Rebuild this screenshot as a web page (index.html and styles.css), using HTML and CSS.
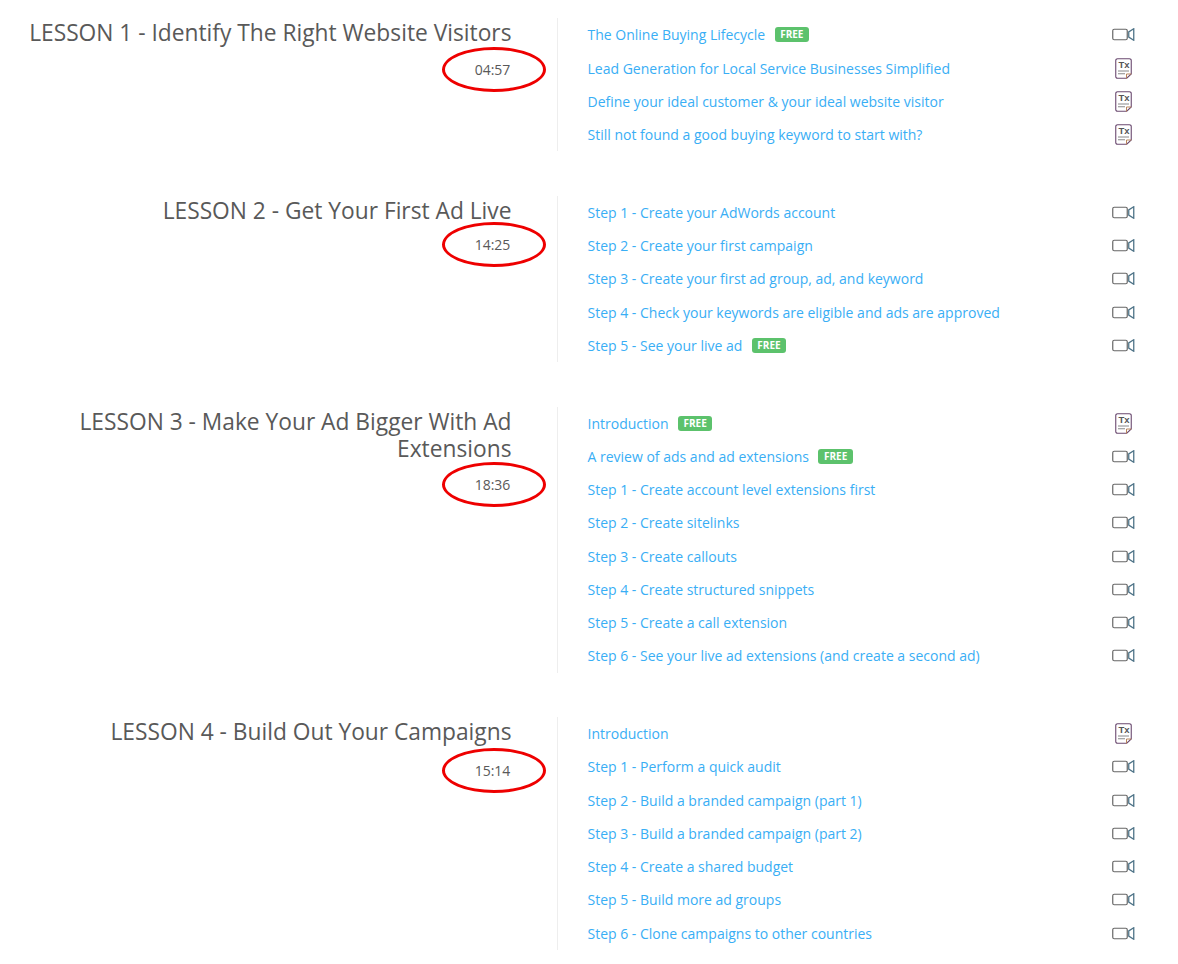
FILE: index.html
```html
<!DOCTYPE html>
<html lang="en">
<head>
    <meta charset="UTF-8">
    <meta name="viewport" content="width=device-width, initial-scale=1.0">
    <title>Course lessons</title>
    <link rel="stylesheet" href="styles.css">
</head>
<body>
    <svg class="sprites" width="0" height="0">
        <symbol id="video" viewBox="0 0 23 13">
            <rect x="0.75" y="1.25" width="14.5" height="10.5" rx="1.5" fill="none" stroke="#666" stroke-width="1.2"/>
            <path d="M21.75 0.75v11.5l-5-3.2v-5.1z" fill="none" stroke="#4f7488" stroke-width="1.3"/>
        </symbol>
        <symbol id="doc-frame" viewBox="0 0 17 21">
            <path d="M2.5 .75h12a1.75 1.75 0 0 1 1.75 1.75v13.5l-4.5 4.25H2.5a1.75 1.75 0 0 1-1.75-1.75V2.5A1.75 1.75 0 0 1 2.5 .75z" fill="#fff" stroke="#6b4a70" stroke-width="1.1"/>
            <path d="M11.5 20.5v-4.5h4.75" fill="none" stroke="#b9855a" stroke-width="1"/>
            <path d="M3 13h11M3 15.75h7" stroke="#888" stroke-width="1"/>
        </symbol>
    </svg>

    <section class="lesson">
        <div class="lesson-head">
            <h2>LESSON 1 - Identify The Right Website Visitors</h2>
            <div class="time time-1">04:57</div>
        </div>
        <ul class="items">
            <li><a>The Online Buying Lifecycle</a><span class="free">FREE</span><svg class="ico-video"><use href="#video"/></svg></li>
            <li><a>Lead Generation for Local Service Businesses Simplified</a><span class="ico-doc"><svg><use href="#doc-frame"/></svg><b>Tx</b></span></li>
            <li><a>Define your ideal customer &amp; your ideal website visitor</a><span class="ico-doc"><svg><use href="#doc-frame"/></svg><b>Tx</b></span></li>
            <li><a>Still not found a good buying keyword to start with?</a><span class="ico-doc"><svg><use href="#doc-frame"/></svg><b>Tx</b></span></li>
        </ul>
    </section>

    <section class="lesson">
        <div class="lesson-head">
            <h2>LESSON 2 - Get Your First Ad Live</h2>
            <div class="time time-2">14:25</div>
        </div>
        <ul class="items">
            <li><a>Step 1 - Create your AdWords account</a><svg class="ico-video"><use href="#video"/></svg></li>
            <li><a>Step 2 - Create your first campaign</a><svg class="ico-video"><use href="#video"/></svg></li>
            <li><a>Step 3 - Create your first ad group, ad, and keyword</a><svg class="ico-video"><use href="#video"/></svg></li>
            <li><a>Step 4 - Check your keywords are eligible and ads are approved</a><svg class="ico-video"><use href="#video"/></svg></li>
            <li><a>Step 5 - See your live ad</a><span class="free">FREE</span><svg class="ico-video"><use href="#video"/></svg></li>
        </ul>
    </section>

    <section class="lesson">
        <div class="lesson-head">
            <h2>LESSON 3 - Make Your Ad Bigger With Ad Extensions</h2>
            <div class="time time-3">18:36</div>
        </div>
        <ul class="items">
            <li><a>Introduction</a><span class="free">FREE</span><span class="ico-doc"><svg><use href="#doc-frame"/></svg><b>Tx</b></span></li>
            <li><a>A review of ads and ad extensions</a><span class="free">FREE</span><svg class="ico-video"><use href="#video"/></svg></li>
            <li><a>Step 1 - Create account level extensions first</a><svg class="ico-video"><use href="#video"/></svg></li>
            <li><a>Step 2 - Create sitelinks</a><svg class="ico-video"><use href="#video"/></svg></li>
            <li><a>Step 3 - Create callouts</a><svg class="ico-video"><use href="#video"/></svg></li>
            <li><a>Step 4 - Create structured snippets</a><svg class="ico-video"><use href="#video"/></svg></li>
            <li><a>Step 5 - Create a call extension</a><svg class="ico-video"><use href="#video"/></svg></li>
            <li><a>Step 6 - See your live ad extensions (and create a second ad)</a><svg class="ico-video"><use href="#video"/></svg></li>
        </ul>
    </section>

    <section class="lesson">
        <div class="lesson-head">
            <h2>LESSON 4 - Build Out Your Campaigns</h2>
            <div class="time time-4">15:14</div>
        </div>
        <ul class="items">
            <li><a>Introduction</a><span class="ico-doc"><svg><use href="#doc-frame"/></svg><b>Tx</b></span></li>
            <li><a>Step 1 - Perform a quick audit</a><svg class="ico-video"><use href="#video"/></svg></li>
            <li><a>Step 2 - Build a branded campaign (part 1)</a><svg class="ico-video"><use href="#video"/></svg></li>
            <li><a>Step 3 - Build a branded campaign (part 2)</a><svg class="ico-video"><use href="#video"/></svg></li>
            <li><a>Step 4 - Create a shared budget</a><svg class="ico-video"><use href="#video"/></svg></li>
            <li><a>Step 5 - Build more ad groups</a><svg class="ico-video"><use href="#video"/></svg></li>
            <li><a>Step 6 - Clone campaigns to other countries</a><svg class="ico-video"><use href="#video"/></svg></li>
        </ul>
    </section>
</body>
</html>
```

FILE: styles.css
```css
body {
  margin: 0;
  padding-top: 18.3px;
  background: #fff;
  font-family: "Open Sans", sans-serif;
  overflow: hidden;
}

.sprites {
  display: block;
  height: 0;
}

.lesson {
  display: flex;
  width: 1178px;
  margin-bottom: 44.5px;
}

.lesson-head {
  width: 511.5px;
  text-align: right;
  flex-shrink: 0;
}

.lesson-head h2 {
  margin: 1px 0 0;
  padding: 0 0 0 20px;
  font-size: 22.75px;
  font-weight: 400;
  line-height: 27px;
  color: #595959;
}

.time {
  width: 104px;
  height: 45px;
  margin: 0 -34px 0 auto;
  padding-right: 2px;
  border: 3px solid #ee0000;
  border-radius: 50%;
  box-sizing: border-box;
  font-size: 14px;
  line-height: 39px;
  text-align: center;
  color: #595959;
}

.time-1 {
  margin-top: 1px;
}

.time-2 {
  margin-top: -2px;
}

.time-4 {
  margin-top: 3px;
}

.items {
  list-style: none;
  margin: 0 0 0 45.5px;
  padding: 0 0 0 29.5px;
  width: 548px;
  border-left: 1px solid #eee;
}

.items li {
  display: flex;
  align-items: center;
  height: 33.25px;
  font-size: 14px;
  color: #39aef5;
}

.free {
  margin-left: 9.5px;
  padding: 0 5.5px;
  height: 15px;
  border-radius: 3px;
  background: #5cc26c;
  color: #fff;
  font-size: 10px;
  font-weight: 700;
  line-height: 15px;
}

.ico-video {
  width: 23px;
  height: 13px;
  margin-left: auto;
  margin-right: 1px;
}

.ico-doc {
  position: relative;
  width: 17px;
  height: 21px;
  margin-left: auto;
  margin-right: 4px;
}

.ico-doc svg {
  display: block;
  width: 17px;
  height: 21px;
}

.ico-doc b {
  position: absolute;
  top: 1px;
  left: 4px;
  font-family: "Liberation Sans", sans-serif;
  font-size: 9.5px;
  line-height: 11px;
  color: #555;
}
```
